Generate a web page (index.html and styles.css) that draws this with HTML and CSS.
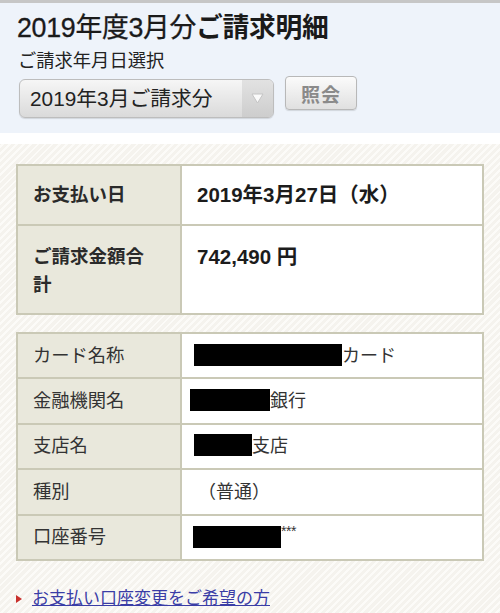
FILE: index.html
```html
<!DOCTYPE html>
<html lang="ja">
<head>
<meta charset="utf-8">
<title>ご請求明細</title>
<link rel="stylesheet" href="styles.css">
</head>
<body>
<div class="topline"></div>
<header class="header">
  <h1 class="title"><span class="title-reg">2019年度3月分</span>ご請求明細</h1>
  <div class="subtitle">ご請求年月日選択</div>
  <div class="select-row">
    <div class="select">
      <span class="select-text">2019年3月ご請求分</span>
      <span class="select-arrow"><svg width="13" height="11" viewBox="0 0 13 11"><path d="M1 1 L12 1 L6.5 10 Z" fill="#fafafa" stroke="#c4c4c4" stroke-width="1"/></svg></span>
    </div>
    <button class="btn">照会</button>
  </div>
</header>
<div class="gap"></div>
<main class="main">
  <table class="tbl tbl-pay">
    <tr class="row-date">
      <th>お支払い日</th>
      <td>2019年3月27日（水）</td>
    </tr>
    <tr class="row-amount">
      <th>ご請求金額合計</th>
      <td>742,490 円</td>
    </tr>
  </table>

  <table class="tbl tbl-bank">
    <tr>
      <th>カード名称</th>
      <td><span class="mask" style="width:148px"></span>カード</td>
    </tr>
    <tr>
      <th>金融機関名</th>
      <td><span class="mask mask-left" style="width:80px"></span>銀行</td>
    </tr>
    <tr>
      <th>支店名</th>
      <td><span class="mask" style="width:58px"></span>支店</td>
    </tr>
    <tr>
      <th>種別</th>
      <td><span class="kind">（普通）</span></td>
    </tr>
    <tr>
      <th>口座番号</th>
      <td><span class="mask mask-num" style="width:88px"></span><span class="stars">***</span></td>
    </tr>
  </table>

  <div class="link-row">
    <span class="tri"></span>
    <a class="link" href="#">お支払い口座変更をご希望の方</a>
  </div>
</main>
</body>
</html>
```

FILE: styles.css
```css
* { box-sizing: border-box; }

html, body {
  margin: 0;
  padding: 0;
}

body {
  width: 500px;
  min-height: 613px;
  font-family: "Liberation Sans", "Noto Sans CJK JP", sans-serif;
  color: #1c1c1c;
  background-color: #f5f3ee;
  background-image: repeating-linear-gradient(135deg, #f5f3ee 0px, #f5f3ee 3px, #fcfbf8 3px, #fcfbf8 5px);
}

.topline {
  height: 3px;
  background: #c6c6c6;
}

.header {
  background: #eef3fa;
  padding: 10px 17px 15px 17px;
}

.title {
  margin: 0;
  font-size: 26.8px;
  line-height: 30px;
  font-weight: bold;
  color: #1a1a1a;
  letter-spacing: -0.3px;
}

.title-reg {
  font-weight: normal;
  -webkit-text-stroke: 0.3px #1a1a1a;
}

.subtitle {
  margin-top: 7px;
  font-size: 18.3px;
  line-height: 22px;
  color: #222;
  padding-left: 1px;
}

.select-row {
  margin-top: 4px;
  display: flex;
  align-items: flex-start;
}

.select {
  margin-top: 3px;
  margin-left: 2px;
  width: 255px;
  height: 39px;
  display: flex;
  align-items: stretch;
  border: 1px solid #bdbdbd;
  border-radius: 6px;
  background: linear-gradient(#f6f6f6, #dadada);
  box-shadow: 0 1px 1px rgba(0,0,0,0.12);
  overflow: hidden;
}

.select-text {
  flex: 1;
  padding-left: 10px;
  font-size: 20.8px;
  line-height: 37px;
  color: #222;
}

.select-arrow {
  width: 31px;
  display: flex;
  align-items: center;
  justify-content: center;
  background: linear-gradient(#e2e2e2, #cdcdcd);
}

.btn {
  margin-left: 11px;
  width: 72px;
  height: 34px;
  padding: 0;
  border: 1px solid #b8b8b8;
  border-radius: 4px;
  background: linear-gradient(#fbfbfb, #e0e0e0);
  box-shadow: 0 1px 1px rgba(0,0,0,0.12);
  font-family: "Liberation Sans", "Noto Sans CJK JP", sans-serif;
  font-size: 19px;
  font-weight: bold;
  color: #8a8a8a;
  letter-spacing: 1px;
}

.gap {
  height: 11px;
  background: #fff;
}

.main {
  padding: 20px 16px 0 16px;
}

.tbl {
  width: 468px;
  border-collapse: collapse;
  border: 2px solid #cac9b6;
  table-layout: fixed;
}

.tbl th,
.tbl td {
  border: 2px solid #cac9b6;
  text-align: left;
}

.tbl th {
  width: 164px;
  background: #e9e8dc;
  padding: 0 20px 0 15px;
  font-size: 18.5px;
  color: #2a2a2a;
}

.tbl td {
  background: #fff;
  padding: 0 10px 0 15px;
  font-size: 18px;
  color: #1c1c1c;
}

.tbl-pay th,
.tbl-pay td {
  font-weight: bold;
}

.tbl-pay td {
  font-size: 20.5px;
}

.row-date th,
.row-date td {
  height: 60px;
  line-height: 28px;
  vertical-align: middle;
}

.row-amount th,
.row-amount td {
  height: 89px;
  padding-top: 17px;
  line-height: 28px;
  vertical-align: top;
}

.tbl-bank {
  margin-top: 17px;
}

.tbl-bank th,
.tbl-bank td {
  height: 45.4px;
  line-height: 24px;
  font-weight: normal;
  vertical-align: middle;
}

.tbl-bank td {
  padding-left: 12px;
  color: #333;
}

.tbl-bank th {
  font-size: 18.3px;
  color: #333;
}

.mask {
  display: inline-block;
  height: 22px;
  background: #000;
  vertical-align: -4px;
}

.mask-left {
  margin-left: -4px;
}

.mask-num {
  margin-left: -1px;
}

.kind {
  margin-left: 4px;
}

.stars {
  display: inline-block;
  font-size: 14px;
  line-height: 14px;
  vertical-align: 8px;
  color: #333;
  letter-spacing: -0.5px;
}

.link-row {
  margin-top: 27px;
  display: flex;
  align-items: center;
  height: 22px;
}

.tri {
  width: 0;
  height: 0;
  border-top: 4px solid transparent;
  border-bottom: 4px solid transparent;
  border-left: 6px solid #c8302c;
  margin-right: 10px;
}

.link {
  font-size: 17px;
  line-height: 22px;
  color: #3a3da6;
  text-decoration: underline;
}
```
